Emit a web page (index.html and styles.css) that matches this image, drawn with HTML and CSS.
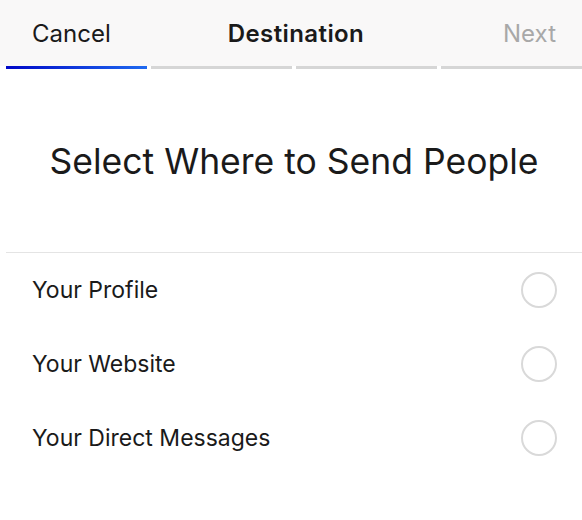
FILE: index.html
```
<!DOCTYPE html>
<html lang="en">
<head>
  <meta charset="UTF-8">
  <title>Destination</title>
  <link rel="stylesheet" href="styles.css">
</head>
<body>

<header class="topbar">
  <div class="nav">
    <span class="nav-cancel">Cancel</span>
    <span class="nav-title">Destination</span>
    <span class="nav-next">Next</span>
  </div>
  <div class="steps">
    <div class="step active"></div>
    <div class="step"></div>
    <div class="step"></div>
    <div class="step"></div>
  </div>
</header>

<h1 class="heading">Select Where to Send People</h1>

<ul class="options">
  <li class="option"><span>Your Profile</span><span class="radio"></span></li>
  <li class="option"><span>Your Website</span><span class="radio"></span></li>
  <li class="option"><span>Your Direct Messages</span><span class="radio"></span></li>
</ul>

</body>
</html>
```

FILE: styles.css
```
body {
  font-family: Inter, "Liberation Sans", sans-serif;
  background: #ffffff;
  color: #1a1a1a;
  margin: 0;
  width: 582px;
}
.topbar {
  background: #f9f8f8;
}
.nav {
  height: 66px;
  display: grid;
  grid-template-columns: 1fr auto 1fr;
  align-items: center;
  padding: 0 26px 0 32px;
  font-size: 24px;
}
.nav-title {
  font-weight: 600;
  letter-spacing: 0.4px;
  padding-left: 4px;
}
.nav-next {
  color: #a8a8a8;
  justify-self: end;
}
.steps {
  display: flex;
  gap: 4px;
  padding-left: 6px;
  background: #ffffff;
}
.step {
  flex: 1;
  height: 3px;
  background: #d6d6d6;
}
.step.active {
  background: linear-gradient(to right, #0008c8, #1f6af0);
}
.heading {
  margin: 0 0 0 6px;
  padding: 71px 0 0;
  height: 112px;
  text-align: center;
  font-size: 35.5px;
  font-weight: 400;
  border-bottom: 1px solid #e4e4e4;
  box-sizing: content-box;
}
.options {
  list-style: none;
  margin: 0;
  padding: 0;
}
.option {
  height: 74px;
  display: flex;
  align-items: center;
  justify-content: space-between;
  padding: 0 25px 0 32px;
  font-size: 23px;
}
.radio {
  width: 32px;
  height: 32px;
  border: 2px solid #d9d9d9;
  border-radius: 50%;
}
```
